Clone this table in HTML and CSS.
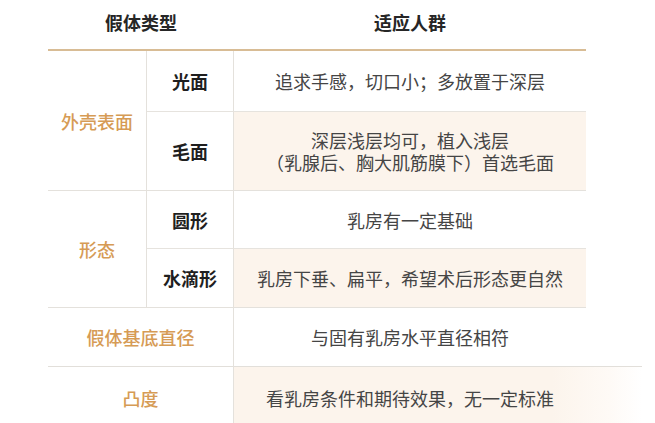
FILE: index.html
```html
<!DOCTYPE html>
<html lang="zh">
<head>
<meta charset="utf-8">
<link rel="stylesheet" href="styles.css">
</head>
<body>
<div class="table">
  <div class="th th-type">假体类型</div>
  <div class="th th-group">适应人群</div>

  <div class="cat cat-shell">外壳表面</div>
  <div class="sub r1">光面</div>
  <div class="desc r1">追求手感，切口小；多放置于深层</div>
  <div class="sub r2">毛面</div>
  <div class="desc r2 shade">深层浅层均可，植入浅层<br>（乳腺后、胸大肌筋膜下）首选毛面</div>

  <div class="cat cat-shape">形态</div>
  <div class="sub r3 top">圆形</div>
  <div class="desc r3 top">乳房有一定基础</div>
  <div class="sub r4">水滴形</div>
  <div class="desc r4 shade">乳房下垂、扁平，希望术后形态更自然</div>

  <div class="cat wide r5 top">假体基底直径</div>
  <div class="desc r5 top">与固有乳房水平直径相符</div>

  <div class="cat wide r6 top2">凸度</div>
  <div class="desc r6 top2 shade last">看乳房条件和期待效果，无一定标准</div>
</div>
</body>
</html>
```

FILE: styles.css
```css
html, body {
  margin: 0;
  padding: 0;
  background: #ffffff;
}
body {
  font-family: "Noto Sans CJK SC", "Noto Sans", sans-serif;
  width: 655px;
  height: 423px;
  overflow: hidden;
}
.table {
  display: grid;
  grid-template-columns: 99px 87px 352px 56px;
  grid-template-rows: 51px 60px 79px 58px 59px 59px 62px;
  margin-left: 48px;
}
.table > div {
  display: flex;
  align-items: center;
  justify-content: center;
  text-align: center;
  font-size: 18px;
  line-height: 22px;
  box-sizing: border-box;
}
.th {
  grid-row: 1;
  font-weight: 700;
  color: #262626;
  border-bottom: 2px solid #d8bc95;
  padding-bottom: 6px;
}
.th-type { grid-column: 1 / 3; }
.th-group { grid-column: 3 / 4; }

.cat {
  grid-column: 1;
  color: #d69b55;
  font-weight: 500;
  border-right: 1px solid #e4e1dc;
}
.cat-shell { grid-row: 2 / 4; }
.cat-shape { grid-row: 4 / 6; border-top: 1px solid #e4e1dc; }
.cat.wide { grid-column: 1 / 3; }

.sub {
  grid-column: 2;
  font-weight: 700;
  color: #1f1f1f;
  border-right: 1px solid #e4e1dc;
}
.desc {
  grid-column: 3;
  color: #454545;
}
.r1 { grid-row: 2; }
.r2 { grid-row: 3; border-top: 1px solid #e6e3de; }
.r3 { grid-row: 4; }
.r4 { grid-row: 5; border-top: 1px solid #e6e3de; }
.r5 { grid-row: 6; }
.r6 { grid-row: 7; }
.top { border-top: 1px solid #e4e1dc; }
.top2 { border-top: 1px solid #e2dfda; }
.shade { background: #fcf4ec; }
.desc.last {
  grid-column: 3 / 5;
  padding-right: 56px;
  background: linear-gradient(to right, #fcf4ec 0%, #fcf4ec 78%, #fefaf6 92%, #ffffff 100%);
}
.cat.r6 { border-right: 1px solid #e4e1dc; }
```
